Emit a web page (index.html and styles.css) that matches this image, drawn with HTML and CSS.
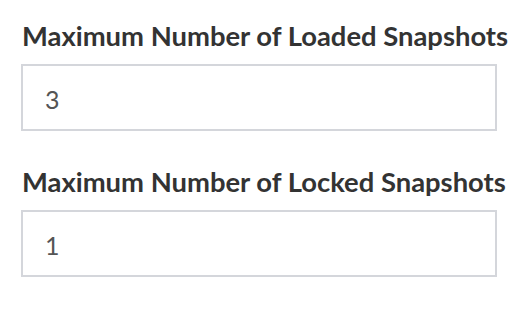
FILE: index.html
```html
<!DOCTYPE html>
<html>
<head>
<meta charset="utf-8">
<link rel="stylesheet" href="styles.css">
</head>
<body>
<div class="form">
  <div class="field">
    <label class="label" for="loaded">Maximum Number of Loaded Snapshots</label>
    <input class="input" id="loaded" type="text" value="3">
  </div>
  <div class="field">
    <label class="label" for="locked">Maximum Number of Locked Snapshots</label>
    <input class="input" id="locked" type="text" value="1">
  </div>
</div>
</body>
</html>
```
FILE: styles.css
```css
html, body {
  margin: 0;
  padding: 0;
  background: #ffffff;
}
.form {
  display: flex;
  flex-direction: column;
  gap: 35px;
  padding: 20px 0 0 21px;
  width: 476px;
}
.field {
  display: flex;
  flex-direction: column;
  gap: 12px;
}
.label {
  font-family: "Lato", "Noto Sans", sans-serif;
  font-weight: 700;
  font-size: 27.4px;
  line-height: 32px;
  color: #333333;
  white-space: nowrap;
  margin-left: 1px;
}
.input {
  box-sizing: border-box;
  height: 67px;
  width: 476px;
  margin: 0;
  border: 2px solid #d4d6db;
  border-radius: 0;
  padding: 2px 0 0 22px;
  font-family: "Lato", "Noto Sans", sans-serif;
  font-size: 25px;
  color: #555555;
  background: #ffffff;
  outline: none;
}
```
